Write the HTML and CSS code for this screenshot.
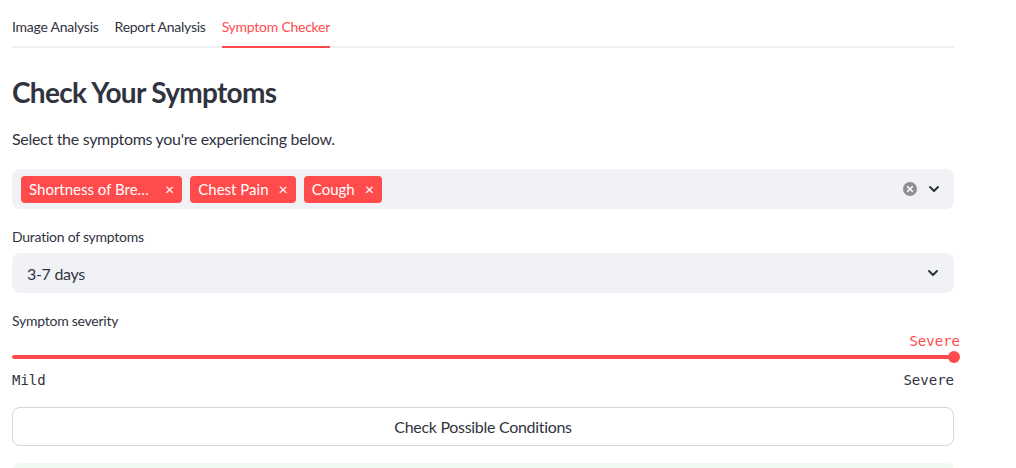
FILE: index.html
```html
<!DOCTYPE html>
<html>
<head>
<meta charset="utf-8">
<link rel="stylesheet" href="styles.css">
</head>
<body>
<main class="page">
  <nav class="tabs">
    <div class="tab">Image Analysis</div>
    <div class="tab">Report Analysis</div>
    <div class="tab active">Symptom Checker</div>
  </nav>

  <h3 class="title">Check Your Symptoms</h3>
  <p class="lead">Select the symptoms you're experiencing below.</p>

  <div class="field multiselect">
    <div class="tags">
      <span class="tag"><span class="tag-text tag-long" title="Shortness of Breath">Shortness of Breath</span><span class="tag-x">×</span></span>
      <span class="tag"><span class="tag-text">Chest Pain</span><span class="tag-x">×</span></span>
      <span class="tag"><span class="tag-text">Cough</span><span class="tag-x">×</span></span>
    </div>
    <div class="controls">
      <svg class="clear" width="14" height="14" viewBox="0 0 14 14"><circle cx="7" cy="7" r="7" fill="#8d8e97"/><path d="M4.6 4.6 L9.4 9.4 M9.4 4.6 L4.6 9.4" stroke="#f0f2f6" stroke-width="1.6" stroke-linecap="round"/></svg>
      <svg class="chev" width="12" height="12" viewBox="0 0 12 12"><path d="M2 4 L6 8 L10 4" fill="none" stroke="#31333f" stroke-width="2" stroke-linecap="round" stroke-linejoin="round"/></svg>
    </div>
  </div>

  <label class="label">Duration of symptoms</label>
  <div class="field select">
    <span class="select-value">3-7 days</span>
    <svg class="chev" width="12" height="12" viewBox="0 0 12 12"><path d="M2 4 L6 8 L10 4" fill="none" stroke="#31333f" stroke-width="2" stroke-linecap="round" stroke-linejoin="round"/></svg>
  </div>

  <label class="label label-slider">Symptom severity</label>
  <div class="slider">
    <div class="slider-value">Severe</div>
    <div class="track"><span class="thumb"></span></div>
    <div class="ticks"><span>Mild</span><span>Severe</span></div>
  </div>

  <button class="btn">Check Possible Conditions</button>

  <div class="success"></div>
</main>
</body>
</html>
```

FILE: styles.css
```css
* { box-sizing: border-box; }
html, body { margin: 0; padding: 0; background: #ffffff; }
body {
  font-family: "Lato", "Noto Sans", sans-serif;
  color: #31333f;
  overflow: hidden;
}
.page {
  width: 954px;
  padding: 8px 0 0 12px;
  display: flex;
  flex-direction: column;
}
.tabs {
  display: flex;
  gap: 16px;
  border-bottom: 2px solid #eeeff2;
  height: 40px;
}
.tab {
  font-size: 14px;
  height: 40px;
  line-height: 38px;
  letter-spacing: -0.25px;
  color: #31333f;
  white-space: nowrap;
}
.tab.active {
  color: #ff4b4b;
  border-bottom: 2px solid #ff4b4b;
}
.title {
  margin: 27px 0 0;
  font-size: 28px;
  font-weight: 700;
  line-height: 34px;
  letter-spacing: -0.7px;
}
.lead {
  margin: 18px 0 0;
  font-size: 16px;
  line-height: 24px;
  letter-spacing: -0.3px;
}
.field {
  background: #f0f2f6;
  border-radius: 8px;
  height: 40px;
  display: flex;
  align-items: center;
}
.multiselect {
  margin-top: 18px;
  padding: 0 14px 0 9px;
  justify-content: space-between;
}
.tags { display: flex; gap: 8px; }
.tag {
  background: #ff4b4b;
  color: #fff;
  border-radius: 4px;
  height: 27px;
  display: flex;
  align-items: center;
  padding: 0 8px;
  font-size: 15px;
  letter-spacing: 0;
}
.tag-long {
  display: inline-block;
  max-width: 126px;
  overflow: hidden;
  text-overflow: ellipsis;
  white-space: nowrap;
}
.tag-x {
  margin-left: 10px;
  font-size: 16px;
  line-height: 1;
}
.controls { display: flex; align-items: center; gap: 11px; }
.clear { display: block; }
.chev { display: block; }
.label {
  display: block;
  margin-top: 18px;
  font-size: 14px;
  line-height: 19px;
  letter-spacing: -0.25px;
}
.select {
  margin-top: 7px;
  padding: 0 15px 0 15px;
  justify-content: space-between;
  font-size: 16px;
  letter-spacing: -0.3px;
}
.label-slider { margin-top: 18px; }
.slider {
  position: relative;
  display: flex;
  flex-direction: column;
}
.slider-value {
  align-self: flex-end;
  margin-right: -6px;
  font-family: "DejaVu Sans Mono", "Liberation Mono", monospace;
  font-size: 14px;
  line-height: 16px;
  color: #ff4b4b;
  margin-top: 3px;
}
.track {
  position: relative;
  margin-top: 6px;
  height: 4px;
  border-radius: 2px;
  background: #ff4b4b;
}
.thumb {
  position: absolute;
  right: -6px;
  top: -4px;
  width: 12px;
  height: 12px;
  border-radius: 50%;
  background: #ff4b4b;
}
.ticks {
  display: flex;
  justify-content: space-between;
  margin-top: 13px;
  font-family: "DejaVu Sans Mono", "Liberation Mono", monospace;
  font-size: 14px;
  line-height: 16px;
  color: #31333f;
}
.btn {
  margin-top: 19px;
  height: 39px;
  width: 100%;
  background: #fff;
  border: 1px solid #d6d6d9;
  border-radius: 8px;
  font-family: inherit;
  font-size: 16px;
  letter-spacing: -0.3px;
  color: #31333f;
}
.success {
  margin-top: 17px;
  height: 40px;
  background: #eef9f1;
  border-radius: 8px;
}
```
